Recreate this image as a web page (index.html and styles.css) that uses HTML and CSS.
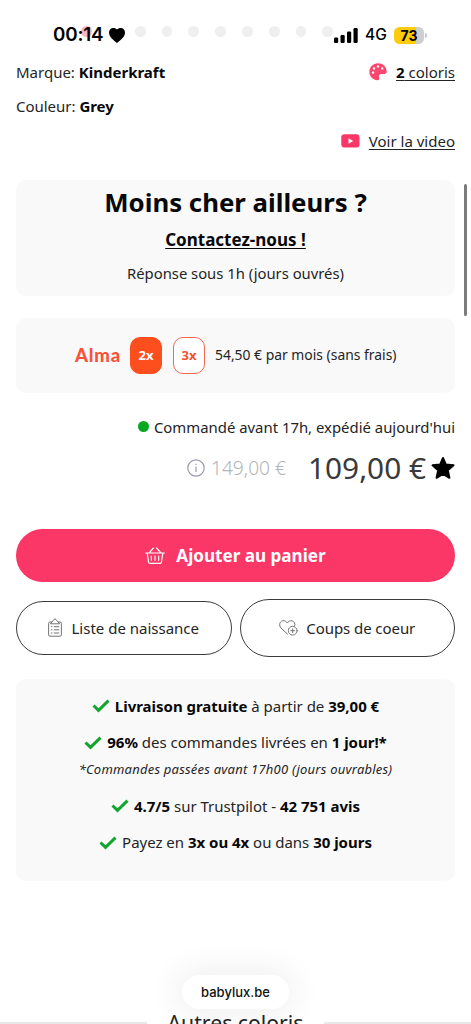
FILE: index.html
```html
<!DOCTYPE html>
<html lang="fr">
<head>
<meta charset="utf-8">
<title>babylux.be</title>
<link rel="stylesheet" href="styles.css">
</head>
<body>
<div class="page">
  <header class="status">
    <div class="dots"><i class="dot active"></i><i class="dot first"></i><i class="dot"></i><i class="dot"></i><i class="dot"></i><i class="dot"></i><i class="dot"></i><i class="dot"></i><i class="dot"></i></div>
    <span class="clock">00:14</span>
    <svg class="heart" width="16" height="15" viewBox="0 0 16 15"><path d="M8 15C5 12.500 0 9 0 4.500C0 1.800 1.900 0 4.200 0C5.900 0 7.300 .6 8 1.500C8.700 .6 10.100 0 11.800 0C14.100 0 16 1.800 16 4.500C16 9 11 12.500 8 15Z"/></svg>
    <svg class="signal" width="24" height="15" viewBox="0 0 24 15"><rect x="0" y="9.500" width="4.200" height="5.500" rx="1.200"/><rect x="6.500" y="7" width="4.200" height="8" rx="1.200"/><rect x="13" y="3.500" width="4.200" height="11.500" rx="1.200"/><rect x="19.500" y="0" width="4.200" height="15" rx="1.200"/></svg>
    <span class="network">4G</span>
    <span class="battery">73</span><i class="cap"></i>
  </header>

  <section class="meta">
    <div class="row"><span>Marque: <b>Kinderkraft</b></span>
      <a class="link"><svg width="18" height="18" viewBox="0 0 18 18"><path fill="#fb456f" d="M9 .3C4 .3.400 4 .400 8.800C.400 13.500 4 17.300 8.500 17.300C10.300 17.300 10.600 16 10.100 14.700C9.300 12.400 10.600 11.100 12.700 11.100H15.200C16.800 11.100 17.700 10 17.700 8.600C17.600 3.700 13.700.3 9 .3Z"/><g fill="#fff"><circle cx="4" cy="9.500" r="1.200"/><circle cx="5" cy="5.500" r="1.200"/><circle cx="9" cy="3.400" r="1.200"/><circle cx="13.200" cy="5.500" r="1.200"/></g></svg><u><b>2</b> coloris</u></a></div>
    <div class="row"><span class="color">Couleur: <b>Grey</b></span></div>
    <div class="row end"><a class="link"><svg width="19" height="14" viewBox="0 0 19 14"><rect x=".3" y=".3" width="18.200" height="13.200" rx="3" fill="#fb3768"/><path d="M7.500 4.200V9.800L12.200 7Z" fill="#fff"/></svg><u>Voir la video</u></a></div>
  </section>

  <section class="card cheaper">
    <h1 class="title">Moins cher ailleurs ?</h1>
    <a class="contact">Contactez-nous !</a>
    <p class="answer">Réponse sous 1h (jours ouvrés)</p>
  </section>

  <section class="card alma">
    <span class="alma-logo">Alma</span>
    <span class="plan on">2x</span><span class="plan">3x</span>
    <span class="monthly">54,50 € par mois (sans frais)</span>
  </section>

  <div class="stock"><i class="stock-dot"></i><span>Commandé avant 17h, expédié aujourd'hui</span></div>
  <div class="prices">
    <svg width="18" height="18" viewBox="0 0 18 18" fill="none" stroke="#9c9cae" stroke-width="1.200"><circle cx="9" cy="9" r="8.200"/><path d="M9 7.600V13M9 4.700V6"/></svg>
    <span class="old">149,00 €</span>
    <span class="price">109,00 €</span>
    <svg class="star" width="24" height="24" viewBox="0 0 24 24"><path stroke="#000" stroke-width="2" stroke-linejoin="round" d="M12 2L14.800 8.500L22.500 9.300L16.800 14.200L18.400 21.800L12 18L5.600 21.800L7.200 14.200L1.500 9.300L9.200 8.500Z"/></svg>
  </div>

  <button class="cart"><svg width="20" height="17" viewBox="0 0 20 17" fill="none" stroke="#fff" stroke-width="1.150" stroke-linecap="round" stroke-linejoin="round"><path d="M.7 6H19.300M2.200 6.200L3.600 15.300Q3.800 16.300 4.700 16.300H15.300Q16.200 16.300 16.400 15.300L17.800 6.200M4 6L8.400 1M16 6L11.600 1M6.300 9V13.300M10 9V13.300M13.700 9V13.300"/></svg><span class="cart-label">Ajouter au panier</span></button>

  <div class="actions">
    <button class="pill"><svg width="14" height="19" viewBox="0 0 14 19" fill="none" stroke="#6a6a6d" stroke-width=".95" stroke-linecap="round" stroke-linejoin="round"><path d="M3.500 4H2Q.6 4 .6 5.500V16.800Q.6 18.200 2 18.200H12Q13.400 18.200 13.400 16.800V5.500Q13.400 4 12 4H10.500M2.700 5.500L5 2.700Q7-.7 9 2.700L11.300 5.500ZM3.300 8.700H4M6.200 8.700H10.800M3.300 11.800H4M6.200 11.800H10.800M3.300 15H4M6.200 15H10.800"/></svg><span>Liste de naissance</span></button>
    <button class="pill tall"><svg width="19" height="16" viewBox="0 0 19 16" fill="none" stroke="#77777a" stroke-width="1" stroke-linecap="round"><path d="M8.600 14.200L2 8C-.3 5.500.4 1.800 3.500.8C5.700.2 7.200 1.300 8.300 3C9.500 1.100 11.300.2 13.200.9C15.500 1.700 16.400 3.800 15.700 6"/><circle cx="13.700" cy="10.700" r="4.400"/><path d="M13.700 8.700V12.700M11.700 10.700H15.700"/></svg><span class="fav-label">Coups de coeur</span></button>
  </div>

  <section class="card perks">
    <p class="perk"><svg class="check" viewBox="0 0 18 14"><path d="M1.500 6.500L6.500 11.300L16.500 1.700"/></svg><span><b>Livraison gratuite</b> à partir de <b>39,00 €</b></span></p>
    <p class="perk"><svg class="check" viewBox="0 0 18 14"><path d="M1.500 6.500L6.500 11.300L16.500 1.700"/></svg><span><b>96%</b> des commandes livrées en <b>1 jour!*</b></span></p>
    <p class="note">*Commandes passées avant 17h00 (jours ouvrables)</p>
    <p class="perk"><svg class="check" viewBox="0 0 18 14"><path d="M1.500 6.500L6.500 11.300L16.500 1.700"/></svg><span><b>4.7/5</b> sur Trustpilot - <b>42 751 avis</b></span></p>
    <p class="perk"><svg class="check" viewBox="0 0 18 14"><path d="M1.500 6.500L6.500 11.300L16.500 1.700"/></svg><span>Payez en <b>3x ou 4x</b> ou dans <b>30 jours</b></span></p>
  </section>

  <h2 class="others"><span>Autres coloris</span></h2>
  <div class="address">babylux.be</div>
  <div class="scrollbar"></div>
</div>
</body>
</html>
```
FILE: styles.css
```css
* { box-sizing: border-box; }
body { margin: 0; background: #fff; }
.page { position: relative; width: 471px; height: 1024px; overflow: hidden; padding: 0 16px; font: 15px/34px "Noto Sans", sans-serif; color: #242426; }
p, h1, h2 { margin: 0; }
b { font-weight: 700; color: #08080a; }
button { font: inherit; color: #242426; padding: 0; }
svg { flex: none; }
span, u, a, p, h1 { white-space: nowrap; }

.status { height: 55px; margin: 0 -16px; padding: 15px 0 0 53px; display: flex; align-items: center; font-family: Inter, sans-serif; color: #000; position: relative; }
.dots { position: absolute; left: 81px; top: 26px; display: flex; gap: 16px; }
.dot { width: 10.800px; height: 10.800px; border-radius: 50%; background: #efeff0; }
.dot.active { background: #f9b5c8; }
.dot.first { margin-left: 27px; }
.clock { position: relative; width: 50px; font-size: 18.800px; font-weight: 600; letter-spacing: -.2px; }
.heart { margin-left: 6px; position: relative; }
.signal { margin-left: 209px; position: relative; }
.network { margin-left: 7px; width: 22px; font-size: 15.500px; font-weight: 500; }
.battery { margin-left: 7px; width: 30px; height: 17px; border-radius: 5.500px; background: linear-gradient(90deg, #fccb0b 73%, #cfcfd1 73%); font-size: 14px; line-height: 17px; font-weight: 700; text-align: center; }
.cap { width: 1.500px; height: 5px; margin-left: 1px; background: #c8c8ca; border-radius: 0 2px 2px 0; }

.row { display: flex; justify-content: space-between; height: 34.300px; }
.row.end { justify-content: flex-end; }
.link { display: flex; align-items: center; gap: 9px; height: 34px; }
.color { letter-spacing: -.02px; }
u { text-underline-offset: 2px; }

.card { background: #f9f9f9; border-radius: 10px; }
.cheaper { margin-top: 22px; height: 116px; display: flex; flex-direction: column; align-items: center; }
.title { font-size: 25.800px; line-height: 45px; font-weight: 700; color: #08080a; }
.contact { font-size: 17px; line-height: 30px; font-weight: 700; text-decoration: underline; text-underline-offset: 2px; color: #08080a; }
.answer { font-size: 14.800px; line-height: 37px; }
.alma { margin-top: 22px; height: 75px; display: flex; align-items: center; padding-left: 59px; font-size: 13.900px; }
.alma-logo { width: 46px; font: 900 18.500px/30px Lato, sans-serif; color: #f8533a; letter-spacing: .8px; }
.plan { width: 32px; height: 37px; margin-left: 9px; border: 1.300px solid #f36a50; border-radius: 10px; background: #fff; color: #f4512f; font-size: 13px; line-height: 35px; font-weight: 700; text-align: center; }
.plan + .plan { margin-left: 11px; }
.plan.on { background: #fd4f1e; border-color: #fd4f1e; color: #fff; }
.monthly { margin-left: 10px; }

.stock { margin-top: 17px; height: 34px; display: flex; justify-content: flex-end; align-items: center; gap: 5px; font-size: 14.900px; line-height: 32px; }
.stock-dot { width: 11px; height: 11px; border-radius: 50%; background: #08a822; }
.prices { height: 48px; display: flex; justify-content: flex-end; align-items: center; }
.old { margin-left: 6px; font-size: 19.200px; font-weight: 300; color: #b4b4b8; }
.price { margin-left: 22px; font-size: 29.800px; font-weight: 400; color: #3a3a3d; }
.star { margin-left: 5px; margin-top: 1px; }

.cart { display: flex; width: 439px; height: 53px; margin-top: 37px; border: 0; border-radius: 27px; background: #fb3768; align-items: center; justify-content: center; gap: 11px; color: #fff; font-size: 17.100px; font-weight: 700; }
.cart-label { padding-top: 1px; }
.actions { display: flex; align-items: center; justify-content: space-between; margin-top: 17px; height: 58px; }
.pill { width: 215.500px; height: 54px; border: 1.300px solid #3c3c3e; border-radius: 29px; background: #fff; display: flex; align-items: center; justify-content: center; gap: 9px; }
.pill.tall { height: 58px; gap: 8px; }
.fav-label { letter-spacing: -.07px; }

.perks { margin-top: 22px; height: 202px; padding-top: 9px; text-align: center; }
.perk { height: 36.500px; line-height: 36.500px; letter-spacing: -.02px; display: flex; align-items: center; justify-content: center; gap: 5px; }
.check { width: 18px; height: 14px; fill: none; stroke: #11a52e; stroke-width: 3; }
.note { font-size: 13px; letter-spacing: .22px; line-height: 17px; height: 27px; font-style: italic; }

.others { margin: 124px -16px 0; display: flex; gap: 21px; align-items: center; font-size: 21.200px; line-height: 36px; font-weight: 400; }
.others::before, .others::after { content: ""; flex: 1; height: 2px; background: #e8e8e9; }
.address { position: absolute; left: 182px; top: 975px; width: 107px; height: 34px; border-radius: 17px; background: #fff; box-shadow: 0 0 30px 8px rgba(0, 0, 0, .055); font: 500 13px/34px Inter, sans-serif; text-align: center; color: #111; }
.scrollbar { position: absolute; left: 464px; top: 184px; width: 3px; height: 132px; border-radius: 2px; background: #7c7c7c; }
```
